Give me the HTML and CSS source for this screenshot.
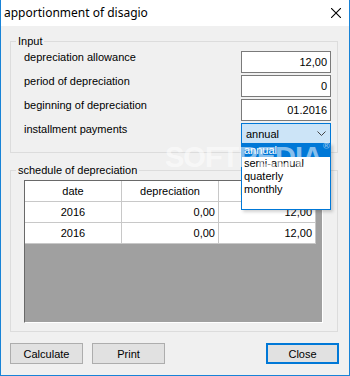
FILE: index.html
```html
<!DOCTYPE html>
<html>
<head>
<meta charset="utf-8">
<title>apportionment of disagio</title>
<link rel="stylesheet" href="styles.css">
</head>
<body>
<div class="window">
  <div class="titlebar">
    <span class="title">apportionment of disagio</span>
    <svg class="close" width="10" height="10" viewBox="0 0 10 10"><path d="M0 0L10 10M10 0L0 10" stroke="#000" stroke-width="1.1" fill="none"/></svg>
  </div>
  <div class="client">
    <fieldset class="group group-input">
      <legend>Input</legend>
      <div class="row"><span class="lbl">depreciation allowance</span><div class="tb">12,00</div></div>
      <div class="row"><span class="lbl">period of depreciation</span><div class="tb">0</div></div>
      <div class="row"><span class="lbl">beginning of depreciation</span><div class="tb">01.2016</div></div>
      <div class="row row-combo"><span class="lbl">installment payments</span>
        <div class="combo-wrap">
          <div class="combo"><span>annual</span><svg class="chev" width="9" height="5" viewBox="0 0 9 5"><path d="M0.5 0.5L4.5 4.5L8.5 0.5" stroke="#444" stroke-width="1" fill="none"/></svg></div>
          <ul class="droplist">
            <li class="sel">annual</li>
            <li>semi-annual</li>
            <li>quaterly</li>
            <li>monthly</li>
          </ul>
        </div>
      </div>
    </fieldset>
    <fieldset class="group group-sched">
      <legend>schedule of depreciation</legend>
      <div class="grid">
        <div class="table">
          <div class="cell head">date</div>
          <div class="cell head">depreciation</div>
          <div class="cell head">book value</div>
          <div class="cell c">2016</div>
          <div class="cell r">0,00</div>
          <div class="cell r">12,00</div>
          <div class="cell c">2016</div>
          <div class="cell r">0,00</div>
          <div class="cell r">12,00</div>
        </div>
      </div>
    </fieldset>
    <div class="buttons">
      <button class="btn">Calculate</button>
      <button class="btn">Print</button>
      <button class="btn btn-default">Close</button>
    </div>
  </div>
  <div class="watermark">SOFTPEDIA<span class="reg">®</span></div>
</div>
</body>
</html>
```
FILE: styles.css
```css
html, body {
  margin: 0;
  padding: 0;
  background: #ffffff;
}
body {
  width: 350px;
  height: 376px;
  overflow: hidden;
  font-family: "Liberation Sans", Arial, sans-serif;
  font-size: 11px;
  color: #000;
}
.window {
  position: relative;
  width: 350px;
  height: 376px;
  box-sizing: border-box;
  border: 1px solid #1883d7;
  border-top: none;
  display: flex;
  flex-direction: column;
}
.titlebar {
  height: 26px;
  flex: 0 0 26px;
  background: #fff;
  display: flex;
  align-items: center;
  justify-content: space-between;
  padding-left: 3px;
  padding-right: 8px;
}
.title {
  font-family: "Noto Sans", "DejaVu Sans", sans-serif;
  font-size: 12px;
  line-height: 16px;
  margin-top: -1px;
}
.close {
  display: block;
  margin-top: -1px;
}
.client {
  flex: 1;
  background: #f0f0f0;
  padding-top: 8px;
}
.group {
  margin: 0 0 0 9px;
  width: 328px;
  box-sizing: border-box;
  border: 1px solid #dcdcdc;
  padding: 3px 6px 8px 5px;
  min-width: 0;
}
.group legend {
  padding: 0 2px;
  margin: 0;
  line-height: 14px;
  font-size: 11px;
}
.group-sched {
  margin-top: 10px;
  padding-right: 14px;
}
.row {
  display: flex;
  justify-content: space-between;
  align-items: flex-start;
  padding-left: 8px;
  margin-bottom: 2px;
}
.row-combo {
  margin-top: 1px;
  margin-bottom: 0;
}
.lbl {
  line-height: 13px;
}
.tb {
  width: 90px;
  height: 22px;
  box-sizing: border-box;
  border: 1px solid #7a7a7a;
  background: #fff;
  text-align: right;
  padding-right: 3px;
  line-height: 20px;
}
.combo-wrap {
  position: relative;
  width: 90px;
  z-index: 5;
}
.combo {
  height: 21px;
  box-sizing: border-box;
  border: 1px solid #0078d7;
  background: #cce4f7;
  display: flex;
  align-items: center;
  justify-content: space-between;
  padding-left: 4px;
  padding-right: 4px;
}
.chev {
  display: block;
}
.droplist {
  position: absolute;
  top: 20px;
  left: 0;
  width: 90px;
  height: 67px;
  box-sizing: border-box;
  margin: 0;
  padding: 0;
  list-style: none;
  background: #fff;
  border: 1px solid #0078d7;
  box-shadow: 2px 2px 3px rgba(0,0,0,0.18);
}
.droplist li {
  height: 13px;
  line-height: 13px;
  padding-left: 2px;
}
.droplist li.sel {
  background: #0078d7;
  color: #fff;
}
.grid {
  margin-left: 8px;
  width: 299px;
  height: 143px;
  box-sizing: border-box;
  border-left: 1px solid #696969;
  border-top: 1px solid #696969;
  border-right: 1px solid #fff;
  border-bottom: 1px solid #fff;
  background: #a0a0a0;
}
.table {
  display: grid;
  grid-template-columns: 97px 97px 97px;
  grid-auto-rows: 21px;
  width: 294px;
}
.cell {
  background: #fff;
  border-right: 1px solid #c8c8c8;
  border-bottom: 1px solid #c8c8c8;
  line-height: 21px;
  white-space: nowrap;
  overflow: hidden;
}
.cell.head {
  text-align: center;
}
.cell.c {
  text-align: center;
}
.cell.r {
  text-align: right;
  padding-right: 3px;
}
.buttons {
  display: flex;
  margin-top: 11px;
  padding-left: 9px;
  padding-right: 10px;
}
.btn {
  width: 73px;
  height: 21px;
  box-sizing: border-box;
  background: #e1e1e1;
  border: 1px solid #adadad;
  font-family: "Liberation Sans", Arial, sans-serif;
  font-size: 11px;
  color: #000;
  padding: 0;
  margin: 0 9px 0 0;
}
.btn-default {
  margin: 0 0 0 auto;
  border: 2px solid #0078d7;
}
.watermark {
  position: absolute;
  left: 164px;
  top: 141px;
  white-space: nowrap;
  font-family: "Liberation Sans", Arial, sans-serif;
  font-weight: bold;
  font-size: 29px;
  letter-spacing: -1px;
  color: rgba(255,255,255,0.55);
  pointer-events: none;
  z-index: 10;
}
.watermark .reg {
  font-size: 9px;
  vertical-align: top;
  margin-left: 1px;
}
```
